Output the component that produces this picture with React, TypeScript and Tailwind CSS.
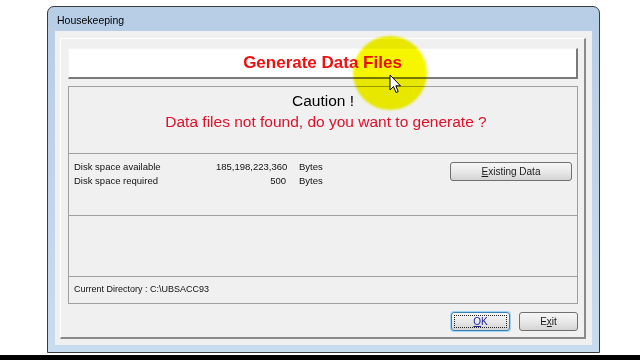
import React from "react";

const sans = { fontFamily: '"Liberation Sans", Arial, sans-serif' };

function Btn({ children, w, focused }: { children: React.ReactNode; w: string; focused?: boolean }) {
  return (
    <div
      className={`${w} h-[19px] rounded-[3px] border ${
        focused ? "border-[#3c7fb1] shadow-[0_0_0_1px_#9fd5f4]" : "border-[#707070]"
      } bg-gradient-to-b from-[#f6f6f6] via-[#e9e9e9] to-[#d4d4d4] flex items-center justify-center p-[2px]`}
    >
      <div
        className={`w-full h-full flex items-center justify-center text-[10px] text-[#1a1a1a] ${
          focused ? "border border-dotted border-[#222]" : ""
        }`}
        style={sans}
      >
        {children}
      </div>
    </div>
  );
}

export default function App() {
  return (
    <div className="w-[640px] h-[360px] bg-white flex flex-col relative overflow-hidden" style={sans}>
      <div className="pt-[6px] pl-[47px]">
        <div className="w-[553px] h-[347px] border border-[#3a3a3a] rounded-t-[7px] bg-gradient-to-b from-[#b7cde6] to-[#c8dcf0] flex flex-col">
          <div className="h-[24px] flex items-center pl-[9px] pt-[3px] text-[10.5px] text-black">Housekeeping</div>
          <div className="flex-1 px-[7px] pb-[7px] flex">
            <div className="flex-1 bg-[#f0f0f0] pt-[7px] pl-[5px] pr-[6px] pb-[6px] flex flex-col">
              <div className="flex-1 border-t border-l border-white border-r-2 border-b-2 border-r-[#8a8a8a] border-b-[#8a8a8a] pt-[9px] pl-[7px] pr-[6px] pb-[5px] flex flex-col">
                <div className="h-[31px] bg-white border-t border-l border-[#f4f4f4] border-r-2 border-b-2 border-r-[#7a7a7a] border-b-[#7a7a7a] flex items-center justify-center">
                  <span className="text-[17px] font-bold text-[#ee1111]">Generate Data Files</span>
                </div>
                <div className="mt-[7px] h-[218px] border border-[#a0a0a0] flex flex-col">
                  <div className="h-[67px] border-b border-[#a0a0a0] flex flex-col items-center pt-[5px]">
                    <div className="text-[15.5px] leading-[18px] text-black">Caution !</div>
                    <div className="mt-[3px] ml-[6px] text-[15.5px] leading-[18px] text-[#e0102a]">
                      Data files not found, do you want to generate ?
                    </div>
                  </div>
                  <div className="h-[62px] border-b border-[#a0a0a0] flex pl-[5px] pr-[5px] pt-[6px]">
                    <div className="flex flex-col text-[9.5px] leading-[14px] text-[#111]">
                      <div className="flex">
                        <span className="w-[142px]">Disk space available</span>
                        <span className="w-[70px] text-right">185,198,223,360</span>
                        <span className="ml-[13px]">Bytes</span>
                      </div>
                      <div className="flex">
                        <span className="w-[142px]">Disk space required</span>
                        <span className="w-[70px] text-right">500</span>
                        <span className="ml-[13px]">Bytes</span>
                      </div>
                    </div>
                    <div className="ml-auto pt-[2px]">
                      <Btn w="w-[122px]">
                        <span>
                          <span className="underline">E</span>xisting Data
                        </span>
                      </Btn>
                    </div>
                  </div>
                  <div className="h-[61px] border-b border-[#a0a0a0]" />
                  <div className="flex-1 flex items-center pl-[5px] text-[9px] text-[#111]">
                    Current Directory : C:\UBSACC93
                  </div>
                </div>
                <div className="mt-[8px] flex justify-end gap-[9px]">
                  <Btn w="w-[59px]" focused>
                    <span className="text-[#2020a0]">
                      <span className="underline">O</span>K
                    </span>
                  </Btn>
                  <Btn w="w-[59px]">
                    <span>
                      E<span className="underline">x</span>it
                    </span>
                  </Btn>
                </div>
              </div>
            </div>
          </div>
        </div>
      </div>
      <div className="mt-auto h-[5px] bg-black" />
      <div className="absolute left-[353px] top-[36px] w-[74px] h-[74px] rounded-full bg-[#f6f600] mix-blend-multiply blur-[1px]" />
      <svg className="absolute left-[389px] top-[74px]" width="13" height="20" viewBox="0 0 13 20">
        <path d="M1 1 L1 16 L4.5 12.5 L7 18.5 L9.2 17.6 L6.8 11.8 L11.5 11.8 Z" fill="#fff" stroke="#000" strokeWidth="1" strokeLinejoin="round" />
      </svg>
    </div>
  );
}
